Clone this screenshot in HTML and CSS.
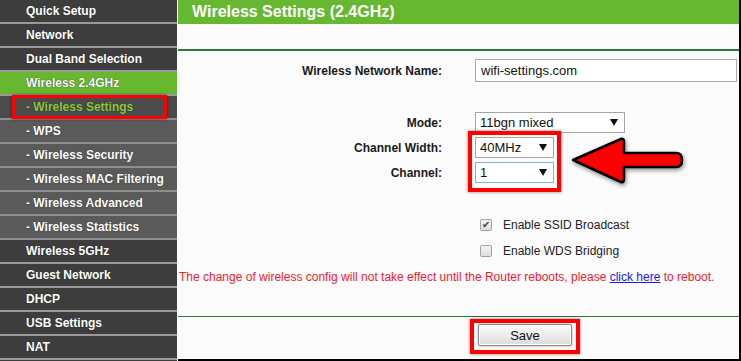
FILE: index.html
```html
<!DOCTYPE html>
<html lang="en">
<head>
    <meta charset="UTF-8">
    <meta name="viewport" content="width=device-width, initial-scale=1.0">
    <title>Wireless Settings (2.4GHz)</title>
    <link rel="stylesheet" href="styles.css">
</head>
<body>
    <div class="page">
        <nav class="sidebar">
            <div class="menu-item">Quick Setup</div>
            <div class="menu-item">Network</div>
            <div class="menu-item">Dual Band Selection</div>
            <div class="menu-item active">Wireless 2.4GHz</div>
            <div class="menu-item sub current">- Wireless Settings</div>
            <div class="menu-item sub">- WPS</div>
            <div class="menu-item sub">- Wireless Security</div>
            <div class="menu-item sub">- Wireless MAC Filtering</div>
            <div class="menu-item sub">- Wireless Advanced</div>
            <div class="menu-item sub">- Wireless Statistics</div>
            <div class="menu-item">Wireless 5GHz</div>
            <div class="menu-item">Guest Network</div>
            <div class="menu-item">DHCP</div>
            <div class="menu-item">USB Settings</div>
            <div class="menu-item">NAT</div>
            <div class="mark mark-menu"></div>
        </nav>

        <main class="main">
            <div class="title">Wireless Settings (2.4GHz)</div>
            <div class="rule"></div>

            <div class="row row-name">
                <div class="label">Wireless Network Name:</div>
                <div class="text-input">wifi-settings.com</div>
            </div>

            <div class="row row-mode">
                <div class="label">Mode:</div>
                <div class="select select-wide"><span>11bgn mixed</span><i class="caret"></i></div>
            </div>
            <div class="row row-sel">
                <div class="label">Channel Width:</div>
                <div class="select"><span>40MHz</span><i class="caret"></i></div>
            </div>
            <div class="row row-sel">
                <div class="label">Channel:</div>
                <div class="select focused"><span>1</span><i class="caret"></i></div>
            </div>

            <div class="check-row first">
                <span class="checkbox checked">&#10004;</span>
                <span>Enable SSID Broadcast</span>
            </div>
            <div class="check-row">
                <span class="checkbox"></span>
                <span>Enable WDS Bridging</span>
            </div>

            <p class="notice">The change of wireless config will not take effect until the Router reboots, please <a href="#">click here</a> to reboot.</p>

            <div class="rule rule-bottom"></div>

            <div class="actions">
                <button class="save-btn">Save</button>
            </div>

            <div class="mark mark-channel"></div>
            <div class="mark mark-save"></div>
            <svg class="arrow" width="116" height="54" viewBox="0 0 116 54">
                <path d="M5 26 L53 5 Q56 4 56 8 L56 19 L108 19 Q114 19 114 26 Q114 33 108 33 L56 33 L56 45 Q56 49 53 48 Z"
                      fill="#f00" stroke="#000" stroke-width="2.5" stroke-linejoin="round"/>
            </svg>
        </main>
    </div>
</body>
</html>
```

FILE: styles.css
```css
* {
    margin: 0;
    padding: 0;
    box-sizing: border-box;
}

body {
    font-family: 'Liberation Sans', Arial, sans-serif;
    background: #fff;
}

.page {
    display: flex;
    width: 741px;
    height: 361px;
    overflow: hidden;
}

/* left menu */
.sidebar {
    position: relative;
    width: 177px;
    flex-shrink: 0;
    background: #3c3c3c;
    display: flex;
    flex-direction: column;
}

.menu-item {
    height: 24px;
    line-height: 22px;
    padding-left: 26px;
    border-bottom: 2px solid #9a9a9a;
    background: #3d3d3d;
    color: #fff;
    font-size: 12px;
    font-weight: bold;
    white-space: nowrap;
    text-shadow: 0 0 1px #222;
}

.menu-item.sub {
    background: #5a5a5a;
    border-bottom-color: #8e8e8e;
}

.menu-item.active {
    background: #67b72f;
}

.menu-item.current {
    background: #4b4b4b;
    color: #8ec63c;
}

/* red annotation frames */
.mark {
    position: absolute;
    border: 3px solid #f00;
    box-shadow: 0 0 3px rgba(0, 0, 0, 0.5);
}

.mark-menu {
    left: 12px;
    top: 95px;
    width: 155px;
    height: 24px;
}

.mark-channel {
    left: 290px;
    top: 131px;
    width: 93px;
    height: 61px;
    border-width: 4px;
}

.mark-save {
    left: 292px;
    top: 319px;
    width: 110px;
    height: 35px;
    border-width: 4px;
}

.arrow {
    position: absolute;
    left: 390px;
    top: 134px;
    filter: drop-shadow(1px 2px 2px rgba(0, 0, 0, 0.45));
}

/* content */
.main {
    position: relative;
    flex: 1;
    margin-left: 1px;
    background: #fbfbfb;
    border-right: 2px solid #000;
    border-bottom: 2px solid #000;
    display: flex;
    flex-direction: column;
}

.title {
    height: 24px;
    line-height: 24px;
    padding-left: 14px;
    background: #66b831;
    color: #fff;
    font-size: 16px;
    font-weight: bold;
}

.rule {
    margin-top: 25px;
    border-top: 2px solid #2b7b40;
}

.row {
    display: flex;
    align-items: center;
    gap: 33px;
    font-size: 12px;
}

.row-name {
    margin-top: 8px;
}

.row-mode {
    margin-top: 30px;
}

.row-sel {
    margin-top: 4px;
}

.label {
    width: 264px;
    text-align: right;
    font-weight: bold;
    color: #1a1a1a;
}

.text-input {
    width: 262px;
    height: 23px;
    line-height: 21px;
    padding-left: 5px;
    border: 1px solid #a9a9a9;
    background: #fff;
    font-size: 13px;
    color: #111;
}

.select {
    width: 79px;
    height: 21px;
    padding: 0 6px 0 4px;
    border: 1px solid #a6a6a6;
    background: #fff;
    font-size: 13px;
    color: #111;
    display: flex;
    align-items: center;
    justify-content: space-between;
}

.select-wide {
    width: 150px;
}

.select.focused {
    border-color: #7fb2e5;
}

.caret {
    width: 0;
    height: 0;
    border-left: 4px solid transparent;
    border-right: 4px solid transparent;
    border-top: 7px solid #111;
}

.check-row {
    display: flex;
    align-items: center;
    gap: 11px;
    height: 26px;
    padding-left: 302px;
    font-size: 12px;
    color: #222;
}

.check-row.first {
    margin-top: 29px;
}

.checkbox {
    width: 12px;
    height: 12px;
    border: 1px solid #a3a3a3;
    border-radius: 2px;
    background: linear-gradient(#f3f3f3, #dedede);
    font-size: 10px;
    line-height: 10px;
    text-align: center;
    color: #444;
}

.notice {
    margin-top: 5px;
    padding-left: 1px;
    line-height: 16px;
    font-size: 12px;
    color: #f0202c;
    white-space: nowrap;
}

.notice a {
    color: #1a1ae6;
}

.rule-bottom {
    margin-top: 31px;
    border-top-width: 1.5px;
}

.actions {
    padding-left: 300px;
    margin-top: 7px;
}

.save-btn {
    width: 94px;
    height: 22px;
    border: 1px solid #8c8c8c;
    border-radius: 2px;
    background: linear-gradient(#fbfbfb, #dcdcdc);
    box-shadow: inset 0 0 0 1px #fff, 0 0 2px rgba(0, 0, 0, 0.4);
    font-family: 'Liberation Sans', Arial, sans-serif;
    font-size: 13px;
    color: #111;
}
```
